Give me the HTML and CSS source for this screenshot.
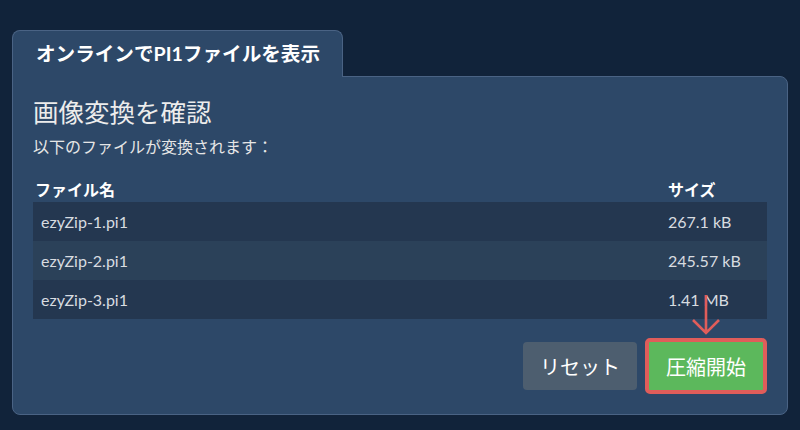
FILE: index.html
```html
<!DOCTYPE html>
<html lang="ja">
<head>
<meta charset="utf-8">
<link rel="stylesheet" href="styles.css">
</head>
<body>
<div class="wrap">
  <div class="tab">オンラインでPI1ファイルを表示</div>
  <div class="panel">
    <h1 class="heading">画像変換を確認</h1>
    <p class="sub">以下のファイルが変換されます：</p>
    <table class="files">
      <thead>
        <tr><th class="c-name">ファイル名</th><th class="c-size">サイズ</th></tr>
      </thead>
      <tbody>
        <tr><td class="c-name">ezyZip-1.pi1</td><td class="c-size">267.1 kB</td></tr>
        <tr><td class="c-name">ezyZip-2.pi1</td><td class="c-size">245.57 kB</td></tr>
        <tr><td class="c-name">ezyZip-3.pi1</td><td class="c-size">1.41 MB</td></tr>
      </tbody>
    </table>
    <div class="actions">
      <button class="btn btn-reset">リセット</button>
      <div class="go-wrap">
        <svg class="arrow" width="32" height="42" viewBox="0 0 32 42">
          <path d="M16 1 V39 M3 26 L16 39 L29 26" fill="none" stroke="#e05d5a" stroke-width="2.6"/>
        </svg>
        <button class="btn btn-go">圧縮開始</button>
      </div>
    </div>
  </div>
</div>
</body>
</html>
```
FILE: styles.css
```css
html, body {
  margin: 0;
  padding: 0;
  background: #11233a;
  font-family: "Lato", "Noto Sans CJK JP", sans-serif;
  color: #fff;
}
.wrap {
  padding: 30px 12px 0 12px;
  width: 776px;
}
.tab {
  display: inline-block;
  box-sizing: border-box;
  width: 331px;
  height: 47px;
  padding: 9px 0 0 23px;
  background: #2d4868;
  border: 1px solid #4a6384;
  border-bottom: none;
  border-radius: 8px 8px 0 0;
  font-size: 19.6px;
  font-weight: 700;
  line-height: 28px;
  position: relative;
  z-index: 1;
  margin-bottom: -1px;
  vertical-align: top;
}
.panel {
  box-sizing: border-box;
  height: 339px;
  background: #2d4868;
  border: 1px solid #4a6384;
  border-radius: 0 8px 8px 8px;
  padding: 20px 20px 0 20px;
}
.heading {
  margin: 0;
  font-size: 25.5px;
  font-weight: 400;
  line-height: 30px;
  color: #ececec;
}
.sub {
  margin: 10px 0 0 0;
  font-size: 16px;
  line-height: 20px;
  color: #e6e6e6;
}
.files {
  width: 100%;
  margin-top: 19px;
  border-collapse: collapse;
}
.files th {
  text-align: left;
  font-size: 16px;
  font-weight: 700;
  line-height: 20px;
  padding: 4px 0 2px 2px;
  color: #fff;
}
.files th.c-size, .files td.c-size {
  width: 99px;
  padding-left: 8px;
}
.files td {
  height: 39px;
  padding: 0 0 0 8px;
  font-size: 16px;
  color: #d8dce0;
}
.files tbody tr:nth-child(odd) { background: #243750; }
.files tbody tr:nth-child(even) { background: #2b4159; }
.actions {
  display: flex;
  justify-content: flex-end;
  align-items: center;
  gap: 8px;
  margin-top: 19px;
}
.btn {
  font-family: "Lato", "Noto Sans CJK JP", sans-serif;
  font-size: 20px;
  color: #fff;
  border-radius: 4px;
  cursor: pointer;
}
.btn-reset {
  width: 114px;
  height: 48px;
  border: none;
  background: #4d5e6f;
}
.go-wrap {
  position: relative;
}
.btn-go {
  display: block;
  width: 122px;
  height: 56px;
  border: 4px solid #e05d5a;
  border-radius: 5px;
  background: #5cb85c;
}
.arrow {
  position: absolute;
  left: 45px;
  bottom: 100%;
  margin-bottom: 2px;
}
```
